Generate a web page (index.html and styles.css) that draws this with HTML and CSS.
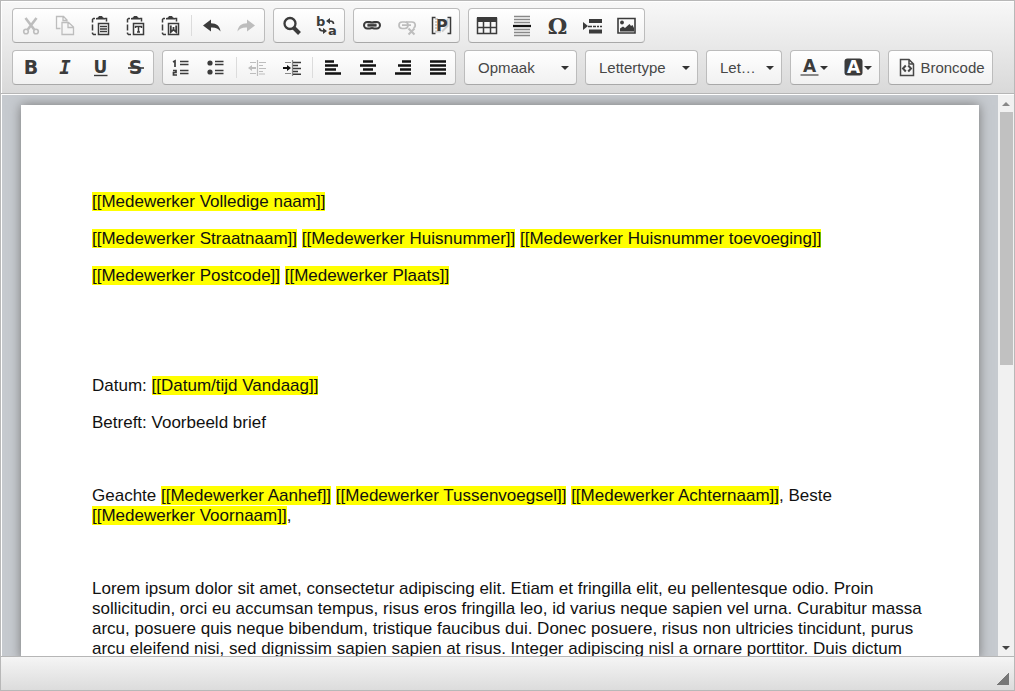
FILE: index.html
```html
<!DOCTYPE html>
<html lang="nl">
<head>
<meta charset="utf-8">
<title>Voorbeeld brief</title>
<link rel="stylesheet" href="styles.css">
</head>
<body>
<div class="editor">
  <div class="toolbar" role="toolbar" aria-label="Werkbalk">
    <div class="row">
      <div class="group">
        <button class="tool off" aria-label="Knippen"><svg viewBox="0 0 21 21"><g fill="none" stroke="currentColor" stroke-width="2"><circle cx="6" cy="16.500" r="2.300" stroke-width="1.600"/><circle cx="16" cy="16.500" r="2.300" stroke-width="1.600"/><path d="M5.500 3l8.700 11.500M16.500 3L7.800 14.500" stroke-width="2.600"/></g></svg></button>
        <button class="tool off" aria-label="Kopiëren"><svg viewBox="0 0 21 21"><path d="M5.500 13.500h-4V1.500h7l3.500 3.500v1.500M8 2v3.500h3.500M7 7.500h6.500l5 4.500v7.500H7zM13 8v4.500h5" fill="none" stroke="currentColor" stroke-width="1.300"/></svg></button>
        <button class="tool" aria-label="Plakken"><svg viewBox="0 0 21 21"><path d="M5 3.500H3.500l-1 1v3m0 2v6m0 2v1l1 1H6M15 3.500h1.500v3" fill="none" stroke="currentColor" stroke-width="1.500"/><path d="M6 4.500V3l2-.5 1-1.500h3l1 1.500 2 .5v1.500z" fill="currentColor"/><path d="M8.500 8.500h10v11h-10z" fill="#fff" stroke="currentColor" stroke-width="1.500"/><path d="M10 11.500h7M10 14h7M10 16.500h7" stroke="currentColor" stroke-width="1.300"/></svg></button>
        <button class="tool" aria-label="Plakken als platte tekst"><svg viewBox="0 0 21 21"><path d="M5 3.500H3.500l-1 1v3m0 2v6m0 2v1l1 1H6M15 3.500h1.500v3" fill="none" stroke="currentColor" stroke-width="1.500"/><path d="M6 4.500V3l2-.5 1-1.500h3l1 1.500 2 .5v1.500z" fill="currentColor"/><path d="M8.500 8.500h10v11h-10z" fill="#fff" stroke="currentColor" stroke-width="1.500"/><path d="M10.500 13v-1.500h6V13M13.500 11.500V17M12 17h3" fill="none" stroke="currentColor" stroke-width="1.500"/></svg></button>
        <button class="tool" aria-label="Plakken vanuit Word"><svg viewBox="0 0 21 21"><path d="M5 3.500H3.500l-1 1v3m0 2v6m0 2v1l1 1H6M15 3.500h1.500v3" fill="none" stroke="currentColor" stroke-width="1.500"/><path d="M6 4.500V3l2-.5 1-1.500h3l1 1.500 2 .5v1.500z" fill="currentColor"/><path d="M8.500 8.500h10v11h-10z" fill="#fff" stroke="currentColor" stroke-width="1.500"/><path d="M10.800 10.500V17l2.700-2.500 2.700 2.500v-6.500M13.500 12v3" fill="none" stroke="currentColor" stroke-width="1.800"/></svg></button>
        <span class="sep"></span>
        <button class="tool" aria-label="Ongedaan maken"><svg viewBox="0 0 21 21"><path d="M2 10.500L10 4.500v3.700c5.500 0 9 2.800 9.500 8.300-2-3.200-5-4.200-9.500-4v4z" fill="currentColor"/></svg></button>
        <button class="tool off" aria-label="Opnieuw uitvoeren"><svg viewBox="0 0 21 21"><path d="M19 10.500L11 4.500v3.700c-5.500 0-9 2.800-9.500 8.300 2-3.200 5-4.200 9.500-4v4z" fill="currentColor"/></svg></button>
      </div>
      <div class="group">
        <button class="tool" aria-label="Zoeken"><svg viewBox="0 0 21 21"><circle cx="9" cy="8.500" r="5.500" fill="none" stroke="currentColor" stroke-width="2.300"/><path d="M12.500 12.500l6 6" stroke="currentColor" stroke-width="4"/></svg></button>
        <button class="tool" aria-label="Vervangen"><svg viewBox="0 0 21 21"><text x="0" y="11" class="letter-s">b</text><text x="12" y="20" class="letter-s">a</text><path d="M17.500 9c0-2-1-3-4-3M3.500 13c0 2 1 3 4 3" fill="none" stroke="currentColor" stroke-width="1.700"/><path d="M14 3v6l-4-3zM7 13v6l4-3z" fill="currentColor"/></svg></button>
      </div>
      <div class="group">
        <button class="tool" aria-label="Link invoegen"><svg viewBox="0 0 21 21"><g fill="none"><rect x="3" y="7" width="9" height="6.500" rx="3.200" stroke="currentColor" stroke-width="2"/><rect x="10" y="7" width="9" height="6.500" rx="3.200" stroke="currentColor" stroke-width="2"/><path d="M6.500 10.200h9" stroke="#999" stroke-width="4"/><path d="M6.500 10.200h9" stroke="currentColor" stroke-width="2"/></g></svg></button>
        <button class="tool off" aria-label="Link verwijderen"><svg viewBox="0 0 21 21"><g fill="none" stroke="currentColor"><rect x="3" y="7" width="9" height="6.500" rx="3.200" stroke-width="1.700"/><path d="M10 7h6c4 0 4 5 1.500 6M6 10.200h9" stroke-width="1.700"/><path d="M12.500 13.500l6 6M18.500 13.500l-6 6" stroke-width="2"/></g></svg></button>
        <button class="tool" aria-label="Plaatshouder invoegen"><svg viewBox="0 0 21 21"><path d="M4 4h3M4 7h2M4 10h2M4 13h2M4 16.500h6M16.500 4v7l-5.500 5.500" fill="none" stroke="#ccc" stroke-width="2"/><path d="M4.500 2.500h-3v16h3M16.500 2.500h3v16h-3" fill="none" stroke="currentColor" stroke-width="1.500"/><text x="5" y="16" class="letter-p">P</text></svg></button>
      </div>
      <div class="group">
        <button class="tool" aria-label="Tabel"><svg viewBox="0 0 21 21"><path d="M1.500 3.500h19v15h-19zM1.500 12.500h19M7.500 6v12M14.500 6v12" fill="none" stroke="currentColor" stroke-width="1.500"/><path d="M1 2h20v5H1z" fill="currentColor"/></svg></button>
        <button class="tool" aria-label="Horizontale lijn"><svg viewBox="0 0 21 21"><path d="M3 1.500h16M3 4.500h16M3 7.500h16M3 14.500h16M3 17.500h16M3 20.500h16" stroke="#888" stroke-width="1.300"/><path d="M2 11h18" stroke="#111" stroke-width="2.300"/></svg></button>
        <button class="tool" aria-label="Speciaal teken"><svg viewBox="0 0 21 21"><text x="11.500" y="19" text-anchor="middle" class="omega">Ω</text></svg></button>
        <button class="tool" aria-label="Pagina-einde"><svg viewBox="0 0 21 21"><path d="M2 7l5 4-5 4z" fill="currentColor"/><path d="M8 6h13M8 16.500h13" stroke="currentColor" stroke-width="4"/><path d="M7 11.500h4m1 0h3m1 0h2m1 0h2" stroke="currentColor" stroke-width="1.500"/></svg></button>
        <button class="tool" aria-label="Afbeelding"><svg viewBox="0 0 21 21"><path d="M2 3.500h17v14.500H2z" fill="none" stroke="currentColor" stroke-width="1.600"/><circle cx="6" cy="7.500" r="1.900" fill="currentColor"/><path d="M4 16.500v-3l3-2 2 1.500 4.500-4 1.500 2 1.500-1 1.500 3v3.500z" fill="currentColor"/></svg></button>
      </div>
    </div>
    <div class="row">
      <div class="group">
        <button class="tool" aria-label="Vet"><svg viewBox="0 0 21 21"><text x="11" y="17" text-anchor="middle" class="letter">B</text></svg></button>
        <button class="tool" aria-label="Cursief"><svg viewBox="0 0 21 21"><text x="10" y="17" text-anchor="middle" class="letter slanted">I</text></svg></button>
        <button class="tool" aria-label="Onderstreept"><svg viewBox="0 0 21 21"><text x="10.500" y="15.500" text-anchor="middle" class="letter u">U</text><path d="M4 18.500h13.500" stroke="currentColor" stroke-width="1.400"/></svg></button>
        <button class="tool" aria-label="Doorhalen"><svg viewBox="0 0 21 21"><text x="10.500" y="17" text-anchor="middle" class="letter">S</text><path d="M3 11h16" stroke="currentColor" stroke-width="1.600"/></svg></button>
      </div>
      <div class="group">
        <button class="tool" aria-label="Genummerde lijst"><svg viewBox="0 0 21 21"><path d="M10 4.500h8.500M10 7.500h8.500M10 13.500h8.500M10 16.500h8.500" stroke="currentColor" stroke-width="1.500"/><path d="M3 5l2-1v6M3 13.500h3v2H3.500v2.500H7" fill="none" stroke="currentColor" stroke-width="1.700"/></svg></button>
        <button class="tool" aria-label="Opsomming"><svg viewBox="0 0 21 21"><path d="M10 4.500h8.500M10 7.500h8.500M10 13.500h8.500M10 16.500h8.500" stroke="currentColor" stroke-width="1.500"/><circle cx="5" cy="6" r="2.600" fill="currentColor"/><circle cx="5" cy="15" r="2.600" fill="currentColor"/></svg></button>
        <span class="sep"></span>
        <button class="tool off" aria-label="Inspringing verkleinen"><svg viewBox="0 0 21 21"><path d="M11.500 3v16M13 5.500h7M13 8.500h4M13 11.500h7M13 14.500h4M13 17h6M4 5.500h6M4 16.500h6" fill="none" stroke="currentColor" stroke-width="1.200"/><path d="M2 11l4-3v2h4v2H6v2z" fill="currentColor"/></svg></button>
        <button class="tool" aria-label="Inspringing vergroten"><svg viewBox="0 0 21 21"><path d="M11.500 3v16M4 5.500h6M4 16.500h6" stroke="#888" stroke-width="1.200"/><path d="M12 5.500h8M12 8.500h5M12 11.500h8M12 14.500h5M12 17.200h8" stroke="currentColor" stroke-width="1.600"/><path d="M10 11L6 8v2H2v2h4v2z" fill="#111"/></svg></button>
        <span class="sep"></span>
        <button class="tool dark" aria-label="Links uitlijnen"><svg viewBox="0 0 21 21"><path d="M3 4.500h9M3 8.500h13M3 12.500h11M3 16.500h16" stroke="currentColor" stroke-width="2.600"/></svg></button>
        <button class="tool dark" aria-label="Centreren"><svg viewBox="0 0 21 21"><path d="M6 4.500h10M3 8.500h16M6 12.500h10M3 16.500h16" stroke="currentColor" stroke-width="2.600"/></svg></button>
        <button class="tool dark" aria-label="Rechts uitlijnen"><svg viewBox="0 0 21 21"><path d="M10 4.500h9M6 8.500h13M8 12.500h11M3 16.500h16" stroke="currentColor" stroke-width="2.600"/></svg></button>
        <button class="tool dark" aria-label="Uitvullen"><svg viewBox="0 0 21 21"><path d="M3 4.500h16M3 8.500h16M3 12.500h16M3 16.500h16" stroke="currentColor" stroke-width="2.600"/></svg></button>
      </div>
      <div class="combo"><select aria-label="Opmaak"><option>Opmaak</option></select></div>
      <div class="combo"><select aria-label="Lettertype"><option>Lettertype</option></select></div>
      <div class="combo narrow"><select aria-label="Lettergrootte"><option>Let…</option></select></div>
      <div class="group">
        <button class="tool color" aria-label="Tekstkleur"><svg viewBox="0 0 21 21"><text x="10.500" y="15" text-anchor="middle" class="letter u">A</text><path d="M1.500 18h18" stroke="#888" stroke-width="2"/></svg><span class="caret"></span></button>
        <button class="tool color" aria-label="Achtergrondkleur"><svg viewBox="0 0 21 21"><rect x="1.500" y="1.500" width="18" height="17" rx="3" fill="currentColor"/><text x="10.500" y="16" text-anchor="middle" class="letter u light">A</text></svg><span class="caret"></span></button>
      </div>
      <div class="group">
        <button class="tool source"><svg viewBox="0 0 21 21"><path d="M4.500 2.500h8.500l4.500 4.500v11.500h-13zM13 2.500V7h4.500" fill="none" stroke="currentColor" stroke-width="1.500"/><path d="M9.800 8.500L7 11.500l2.800 3M12.200 8.500l2.800 3-2.800 3" fill="none" stroke="currentColor" stroke-width="2"/></svg>Broncode</button>
      </div>
    </div>
  </div>
  <div class="workspace">
    <div class="canvas">
      <main class="page" contenteditable="true" spellcheck="false">
        <section class="address">
          <p><mark>[[Medewerker Volledige naam]]</mark></p>
          <p><mark>[[Medewerker Straatnaam]]</mark> <mark>[[Medewerker Huisnummer]]</mark> <mark>[[Medewerker Huisnummer toevoeging]]</mark></p>
          <p><mark>[[Medewerker Postcode]]</mark> <mark>[[Medewerker Plaats]]</mark></p>
        </section>
        <section class="subject">
          <p>Datum: <mark>[[Datum/tijd Vandaag]]</mark></p>
          <p>Betreft: Voorbeeld brief</p>
        </section>
        <p class="greeting">Geachte <mark>[[Medewerker Aanhef]]</mark> <mark>[[Medewerker Tussenvoegsel]]</mark> <mark>[[Medewerker Achternaam]]</mark>, Beste <mark>[[Medewerker Voornaam]]</mark>,</p>
        <p>Lorem ipsum dolor sit amet, consectetur adipiscing elit. Etiam et fringilla elit, eu pellentesque odio. Proin sollicitudin, orci eu accumsan tempus, risus eros fringilla leo, id varius neque sapien vel urna. Curabitur massa arcu, posuere quis neque bibendum, tristique faucibus dui. Donec posuere, risus non ultricies tincidunt, purus arcu eleifend nisi, sed dignissim sapien sapien at risus. Integer adipiscing nisl a ornare porttitor. Duis dictum</p>
      </main>
    </div>
    <div class="scrollbar" aria-hidden="true">
      <span class="arrow up"></span>
      <span class="track"><span class="thumb"></span></span>
      <span class="arrow down"></span>
    </div>
  </div>
  <footer class="status"><span class="grip"></span></footer>
</div>
</body>
</html>
```

FILE: styles.css
```css
* { box-sizing: border-box; }
body { margin: 0; font-family: "Liberation Sans", Arial, sans-serif; }
.editor {
  display: flex;
  flex-direction: column;
  height: 100vh;
  border: 1px solid #b8b8b8;
}
.toolbar {
  display: flex;
  flex-direction: column;
  flex: none;
  gap: 7px;
  padding: 7px 11px 8px;
  border-bottom: 1px solid #b6b6b6;
  background: linear-gradient(#f8f8f8, #d9d9d9);
  box-shadow: inset 0 1px #fff, inset 1px 0 #fff;
}
.row { display: flex; gap: 8px; }
.group, .combo {
  display: flex;
  flex: none;
  height: 35px;
  border: 1px solid #bcbcbc;
  border-bottom-color: #a8a8a8;
  border-radius: 4px;
  background: linear-gradient(#fff, #f1f1f1);
}
.tool {
  display: flex;
  align-items: center;
  justify-content: center;
  width: 35px;
  padding: 0;
  border: 0;
  background: none;
  color: #3b3b3b;
  font: 15px "Liberation Sans", Arial, sans-serif;
}
.tool svg { flex: none; width: 21px; height: 21px; overflow: visible; }
.off { color: #bdbdbd; }
.dark { color: #111; }
.sep {
  width: 1px;
  margin: 6px 2px 6px 3px;
  background: #dcdcdc;
}
.color { width: 44px; }
.source {
  width: 103px;
  gap: 3px;
  color: #474747;
}
.letter, .letter-s, .letter-p {
  fill: currentColor;
  font: bold 19px "DejaVu Sans", sans-serif;
}
.slanted { font: italic bold 19px "DejaVu Sans Mono", monospace; }
.u { font-size: 17px; }
.light { fill: #fff; }
.letter-s { font-size: 13px; }
.letter-p { font-size: 16px; }
.omega { fill: currentColor; font: bold 22px "DejaVu Serif", serif; }
.combo { position: relative; width: 113px; }
.narrow { width: 76px; }
.combo select {
  width: 100%;
  padding: 0 0 1px 13px;
  border: 0;
  background: none;
  color: #474747;
  font: 15px "Liberation Sans", Arial, sans-serif;
  appearance: none;
}
.combo::after, .caret {
  width: 0;
  border: 4px solid transparent;
  border-top-color: #333;
  border-bottom: 0;
  content: "";
}
.combo::after { position: absolute; top: 15px; right: 7px; pointer-events: none; }
.workspace {
  display: flex;
  flex: 1;
  min-height: 0;
  border: 1px solid #fff;
  border-width: 1px 0 0 1px;
}
.canvas {
  flex: 1;
  min-width: 0;
  overflow: hidden;
  padding: 10px 19px 0 19px;
  background: #c6cacf;
}
.page {
  min-height: 100%;
  padding: 87px 48px 0 71px;
  background: #fff;
  box-shadow: 0 0 11px #777;
  color: #111;
  font-size: 17px;
  line-height: 20px;
  outline: 0;
}
.page p { margin: 0 0 17px; }
.page mark { background: #ff0; color: inherit; }
.address { margin-bottom: 90px; }
.subject { margin-bottom: 53px; }
.page .greeting { margin-bottom: 53px; }
.scrollbar {
  display: flex;
  flex-direction: column;
  width: 16px;
  flex: none;
  background: #f1f1f1;
}
.arrow {
  display: flex;
  align-items: center;
  justify-content: center;
  height: 17px;
}
.arrow::before { border: 4px solid transparent; content: ""; }
.up::before { border-bottom-color: #888; border-top: 0; }
.down::before { border-top-color: #444; border-bottom: 0; }
.track { flex: 1; padding: 0 1px 0 2px; }
.thumb {
  display: block;
  height: 48%;
  background: #c1c1c1;
}
.status {
  display: flex;
  flex: none;
  align-items: flex-end;
  justify-content: flex-end;
  height: 34px;
  padding: 5px;
  border-top: 1px solid #b6b6b6;
  background: linear-gradient(#f5f5f5, #dcdcdc);
}
.grip {
  width: 12px;
  height: 12px;
  background: linear-gradient(135deg, transparent 50%, #777 50%);
}
```
